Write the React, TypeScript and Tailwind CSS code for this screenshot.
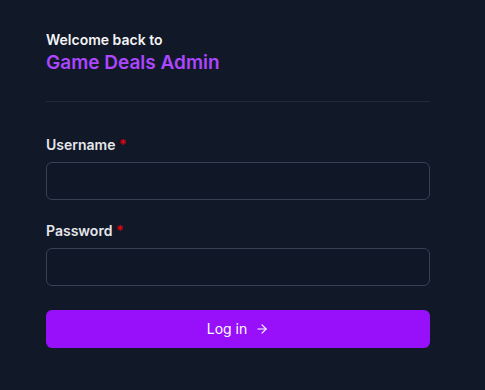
import { ArrowRight } from 'lucide-react';

const Field = ({ label, type }: { label: string; type: string }) => (
  <div className="flex flex-col gap-[7px]">
    <label className="text-sm font-semibold text-gray-200">
      {label} <span className="text-red-600">*</span>
    </label>
    <input
      type={type}
      className="h-[38px] w-full rounded-md border border-gray-700 bg-gray-900 px-3 text-sm text-gray-100 outline-none"
    />
  </div>
);

const App = () => {
  return (
    <div className="min-h-[390px] w-full bg-[#111827] font-['Inter',sans-serif]">
      <div className="ml-[46px] w-[384px] pt-[30px]">
        <div className="flex flex-col">
          <p className="text-sm font-semibold leading-5 text-gray-100">Welcome back to</p>
          <h1 className="text-[19px] font-semibold leading-[26px] text-[#ad46ff]">Game Deals Admin</h1>
        </div>
        <div className="mt-[25px] h-px bg-gray-800" />
        <form className="mt-[33px] flex flex-col gap-[21px]" onSubmit={(e) => e.preventDefault()}>
          <Field label="Username" type="text" />
          <Field label="Password" type="password" />
          <button
            type="submit"
            className="mt-[3px] flex h-[38px] items-center justify-center gap-2 rounded-md bg-[#9810fa] text-sm font-normal text-white"
          >
            Log in <ArrowRight size={14} />
          </button>
        </form>
      </div>
    </div>
  );
};

export default App;
